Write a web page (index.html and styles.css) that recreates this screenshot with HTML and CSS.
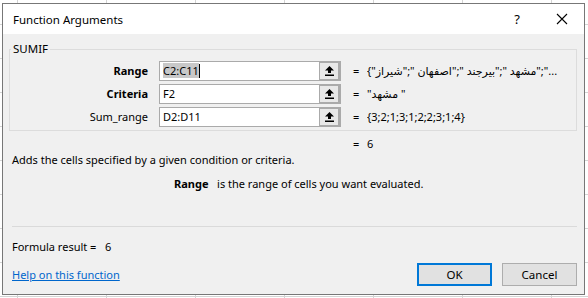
FILE: index.html
```html
<!DOCTYPE html>
<html>
<head>
  <title>Function Arguments</title>
  <link rel="stylesheet" href="styles.css">
</head>
<body>
  <div class="dialog">
    <div class="titlebar">
      <span class="title">Function Arguments</span>
      <span class="help-btn">?</span>
      <span class="close-btn">
        <svg width="12" height="12" viewBox="0 0 12 12"><path d="M1 1L11 11M11 1L1 11" stroke="#000" stroke-width="1.1" fill="none"/></svg>
      </span>
    </div>

    <div class="content">
      <fieldset class="group">
        <legend>SUMIF</legend>

        <div class="arg-row">
          <label class="arg-label bold">Range</label>
          <div class="ref-box">
            <div class="ref-input"><span class="sel">C2:C11</span><span class="caret"></span></div>
            <div class="ref-btn">
              <div class="ref-btn-inner">
                <svg width="9" height="10" viewBox="0 0 9 10"><path d="M4.5 0L9 4.5H6V7H3V4.5H0Z" fill="#000"/><rect x="0" y="8.5" width="9" height="1.5" fill="#000"/></svg>
              </div>
            </div>
          </div>
          <span class="eq">=</span>
          <span class="arg-value">{"مشهد ";"بیرجند ";"اصفهان ";"شیراز";"...</span>
        </div>

        <div class="arg-row">
          <label class="arg-label bold">Criteria</label>
          <div class="ref-box">
            <div class="ref-input">F2</div>
            <div class="ref-btn">
              <div class="ref-btn-inner">
                <svg width="9" height="10" viewBox="0 0 9 10"><path d="M4.5 0L9 4.5H6V7H3V4.5H0Z" fill="#000"/><rect x="0" y="8.5" width="9" height="1.5" fill="#000"/></svg>
              </div>
            </div>
          </div>
          <span class="eq">=</span>
          <span class="arg-value">"مشهد "</span>
        </div>

        <div class="arg-row">
          <label class="arg-label">Sum_range</label>
          <div class="ref-box">
            <div class="ref-input">D2:D11</div>
            <div class="ref-btn">
              <div class="ref-btn-inner">
                <svg width="9" height="10" viewBox="0 0 9 10"><path d="M4.5 0L9 4.5H6V7H3V4.5H0Z" fill="#000"/><rect x="0" y="8.5" width="9" height="1.5" fill="#000"/></svg>
              </div>
            </div>
          </div>
          <span class="eq">=</span>
          <span class="arg-value">{3;2;1;3;1;2;2;3;1;4}</span>
        </div>
      </fieldset>

      <div class="result-row">
        <span class="eq">=</span>
        <span class="arg-value">6</span>
      </div>

      <p class="desc">Adds the cells specified by a given condition or criteria.</p>
      <p class="arg-desc"><span class="bold">Range</span>&nbsp;&nbsp; is the range of cells you want evaluated.</p>

      <div class="separator"></div>

      <p class="formula">Formula result =&nbsp;&nbsp;&nbsp;6</p>

      <div class="bottom">
        <a class="help-link" href="#">Help on this function</a>
        <div class="buttons">
          <button class="btn btn-default">OK</button>
          <button class="btn">Cancel</button>
        </div>
      </div>
    </div>
  </div>
</body>
</html>
```

FILE: styles.css
```css
/* page behind the dialog: spreadsheet grid */
body {
  margin: 0;
  width: 588px;
  height: 298px;
  overflow: hidden;
  font-family: "Noto Sans", "DejaVu Sans", sans-serif;
  font-size: 11px;
  color: #000;
  background-color: #fff;
  background-image:
    linear-gradient(to right, #d4d4d4 1px, transparent 1px),
    linear-gradient(to bottom, #d4d4d4 1px, transparent 1px);
  background-size: 89px 34px;
  background-position: 17px 24px;
}

.dialog {
  margin: 3px 0 0 2px;
  width: 581px;
  height: 290px;
  border: 1px solid #777;
  background: #f0f0f0;
  display: flex;
  flex-direction: column;
}

/* title bar */
.titlebar {
  height: 30px;
  flex-shrink: 0;
  background: #fff;
  display: flex;
  align-items: center;
  padding-left: 10px;
}

.title {
  flex: 1;
  font-size: 11.5px;
}

.help-btn {
  width: 46px;
  text-align: center;
  font-size: 13px;
}

.close-btn {
  width: 44px;
  display: flex;
  justify-content: center;
  align-items: center;
}

.content {
  padding: 8px 7px 0 6px;
  display: flex;
  flex-direction: column;
}

/* argument group box */
.group {
  margin: 0;
  padding: 3px 0 5px 0;
  border: 1px solid #dcdcdc;
  height: 79px;
  box-sizing: content-box;
}

.group legend {
  padding: 0 2px;
  margin-left: 1px;
  line-height: 14px;
  font-size: 11.5px;
}

.arg-row,
.result-row {
  display: grid;
  grid-template-columns: 140px 191px 26px 1fr;
  align-items: center;
  height: 23px;
}

.arg-row .arg-label {
  text-align: right;
  padding-right: 2px;
}

.bold {
  font-weight: bold;
}

.ref-box {
  margin-left: 9px;
  height: 20px;
  display: flex;
  border: 1px solid #aaa;
  box-sizing: border-box;
}

.ref-input {
  flex: 1;
  background: #fff;
  display: flex;
  align-items: center;
  padding-left: 3px;
  white-space: nowrap;
}

.sel {
  background: #c8c8c8;
}

.caret {
  display: inline-block;
  width: 1px;
  height: 14px;
  background: #000;
}

.ref-btn {
  width: 21px;
  background: #aaa;
  padding: 1px 2px 1px 1px;
  box-sizing: border-box;
}

.ref-btn-inner {
  height: 100%;
  background: #e8e8e8;
  display: flex;
  align-items: center;
  justify-content: center;
}

.eq {
  padding-left: 12px;
}

.arg-value {
  white-space: nowrap;
  overflow: hidden;
}

.result-row {
  margin-top: 2px;
  height: 21px;
  grid-template-columns: 141px 191px 26px 1fr;
}

.result-row .eq {
  grid-column: 3;
}

.desc {
  margin: -2px 0 0 0;
  line-height: 16px;
  padding-left: 3px;
}

.arg-desc {
  margin: 8px 0 0 0;
  padding-left: 165px;
  line-height: 16px;
}

.separator {
  margin: 34px 0 0 3px;
  height: 1px;
  background: #dadada;
}

.formula {
  margin: 12px 0 0 3px;
  line-height: 16px;
}

.bottom {
  display: flex;
  justify-content: space-between;
  align-items: center;
  margin-top: 8px;
  padding-left: 3px;
}

.help-link {
  color: #0066cc;
  text-decoration: underline;
}

.buttons {
  display: flex;
  gap: 10px;
}

.btn {
  width: 75px;
  height: 23px;
  font-family: inherit;
  font-size: 11.5px;
  background: #e1e1e1;
  border: 1px solid #adadad;
  padding: 0;
  color: #000;
}

.btn-default {
  border: 2px solid #0078d7;
}
```
